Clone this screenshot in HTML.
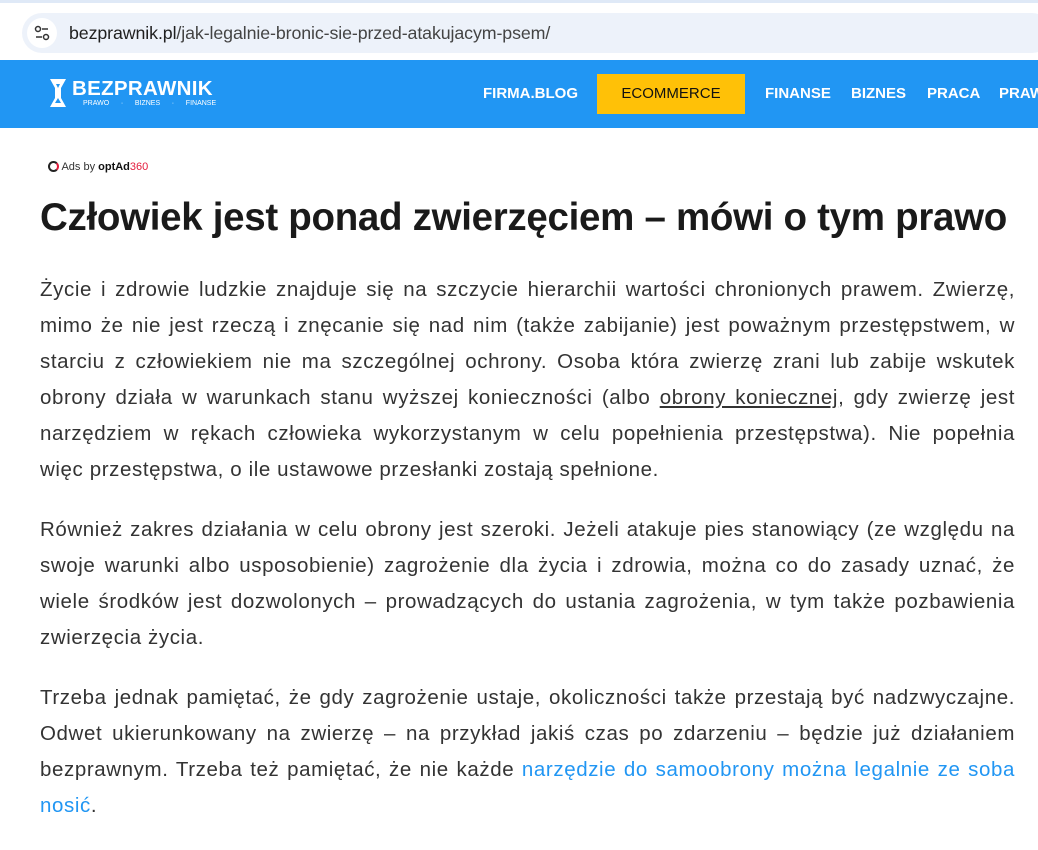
<!DOCTYPE html>
<html><head><meta charset="utf-8"><style>
*{margin:0;padding:0;box-sizing:border-box}
body{width:1038px;height:850px;overflow:hidden;background:#fff;font-family:"Liberation Sans",sans-serif;position:relative}
.top{position:absolute;left:0;top:0;width:1038px;height:60px;background:#fff;border-top:3px solid #dfe9f7}
.url{position:absolute;left:22px;top:10px;width:1030px;height:40px;border-radius:20px;background:#edf2fa}
.url .ic{position:absolute;left:5px;top:5px;width:30px;height:30px;border-radius:15px;background:#fff}
.url .t{position:absolute;left:47px;top:10px;font-size:17.8px;color:#1f1f1f;letter-spacing:-0.1px}
.url .t span{color:#444}
.nav{position:absolute;left:0;top:60px;width:1038px;height:68px;background:#2196f3}
.logo{position:absolute;left:72px;top:77px;color:#fff;font-weight:bold;font-size:20.5px;letter-spacing:0.3px}
.sub{position:absolute;left:83px;top:100px;color:#fff;font-size:7px;word-spacing:0}
.ni{position:absolute;top:85px;color:#fff;font-weight:bold;font-size:15px}
.ec{position:absolute;left:597px;top:74px;width:148px;height:40px;background:#ffc107;color:#111;font-size:15px;text-align:center;line-height:40px}
.ads{position:absolute;left:48px;top:161px;font-size:11px;color:#333}
h1{position:absolute;left:40px;top:196px;font-size:38.5px;font-weight:bold;color:#1a1a1a;letter-spacing:-0.3px;white-space:nowrap}
.l{position:absolute;left:40px;width:975px;font-size:20.5px;letter-spacing:0.6px;line-height:36px;color:#333;text-align:justify;text-align-last:justify;white-space:nowrap}
.l.e{text-align-last:left}
a{color:#2196f3;text-decoration:none}
u{text-decoration:underline}
</style></head><body>
<div class="top"><div class="url"><div class="ic"><svg width="30" height="30"><circle cx="11" cy="11" r="2.5" fill="none" stroke="#333" stroke-width="1.5"/><line x1="15" y1="11" x2="21" y2="11" stroke="#333" stroke-width="1.5"/><line x1="9" y1="19" x2="15" y2="19" stroke="#333" stroke-width="1.5"/><circle cx="19" cy="19" r="2.5" fill="none" stroke="#333" stroke-width="1.5"/></svg></div><div class="t">bezprawnik.pl<span>/jak-legalnie-bronic-sie-przed-atakujacym-psem/</span></div></div></div>
<div class="nav"></div>
<svg style="position:absolute;left:50px;top:79px" width="16" height="28"><path d="M0 0H16L11 9V19L16 28H0L5 19V9Z" fill="#fff"/><path d="M6 5H10L8 9Z M5 24L8 19L11 24Z" fill="#2196f3"/></svg>
<div class="logo">BEZPRAWNIK</div>
<div class="sub">PRAWO&nbsp;&nbsp;&nbsp;&nbsp;&nbsp;&nbsp;·&nbsp;&nbsp;&nbsp;&nbsp;&nbsp;&nbsp;BIZNES&nbsp;&nbsp;&nbsp;&nbsp;&nbsp;&nbsp;·&nbsp;&nbsp;&nbsp;&nbsp;&nbsp;&nbsp;FINANSE</div>
<div class="ni" style="left:483px">FIRMA.BLOG</div>
<div class="ec">ECOMMERCE</div>
<div class="ni" style="left:765px">FINANSE</div>
<div class="ni" style="left:851px">BIZNES</div>
<div class="ni" style="left:927px">PRACA</div>
<div class="ni" style="left:999px">PRAWO</div>
<div class="ads"><span style="display:inline-block;width:11px;height:11px;border:2px solid #222;border-radius:50%;border-right-color:#e31b3c;vertical-align:-2px"></span> Ads by <b style="color:#111">optAd</b><span style="color:#e31b3c">360</span></div>
<h1>Człowiek jest ponad zwierzęciem – mówi o tym prawo</h1>
<div class="l" style="top:272px">Życie i zdrowie ludzkie znajduje się na szczycie hierarchii wartości chronionych prawem. Zwierzę,</div>
<div class="l" style="top:308px">mimo że nie jest rzeczą i znęcanie się nad nim (także zabijanie) jest poważnym przestępstwem, w</div>
<div class="l" style="top:344px">starciu z człowiekiem nie ma szczególnej ochrony. Osoba która zwierzę zrani lub zabije wskutek</div>
<div class="l" style="top:380px">obrony działa w warunkach stanu wyższej konieczności (albo <u>obrony koniecznej</u>, gdy zwierzę jest</div>
<div class="l" style="top:416px">narzędziem w rękach człowieka wykorzystanym w celu popełnienia przestępstwa). Nie popełnia</div>
<div class="l e" style="top:452px">więc przestępstwa, o ile ustawowe przesłanki zostają spełnione.</div>
<div class="l" style="top:512px">Również zakres działania w celu obrony jest szeroki. Jeżeli atakuje pies stanowiący (ze względu na</div>
<div class="l" style="top:548px">swoje warunki albo usposobienie) zagrożenie dla życia i zdrowia, można co do zasady uznać, że</div>
<div class="l" style="top:584px">wiele środków jest dozwolonych – prowadzących do ustania zagrożenia, w tym także pozbawienia</div>
<div class="l e" style="top:620px">zwierzęcia życia.</div>
<div class="l" style="top:680px">Trzeba jednak pamiętać, że gdy zagrożenie ustaje, okoliczności także przestają być nadzwyczajne.</div>
<div class="l" style="top:716px">Odwet ukierunkowany na zwierzę – na przykład jakiś czas po zdarzeniu – będzie już działaniem</div>
<div class="l" style="top:752px">bezprawnym. Trzeba też pamiętać, że nie każde <a>narzędzie do samoobrony można legalnie ze soba</a></div>
<div class="l e" style="top:788px"><a>nosić</a>.</div>
</body></html>
